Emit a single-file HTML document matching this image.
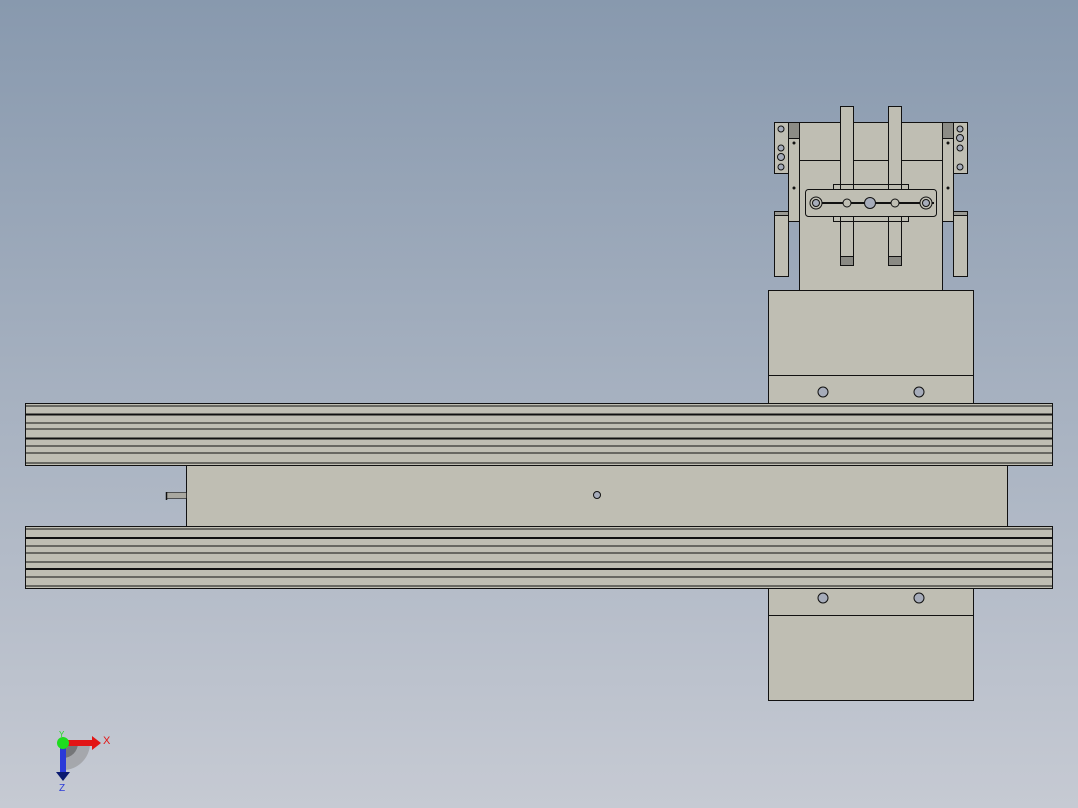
<!DOCTYPE html><html><head><style>body{margin:0;width:1078px;height:808px;overflow:hidden;background:linear-gradient(#8899ae,#c6cad3);}</style></head><body>
<svg width="1078" height="808" style="position:absolute;left:0;top:0" font-family="Liberation Sans, sans-serif">
<g fill="#bfbeb3" stroke="#111" stroke-width="1">
<!-- lower block bottom -->
<rect x="768.5" y="588.5" width="205" height="112"/>
<line x1="768" y1="615.5" x2="973" y2="615.5"/>
<circle cx="823" cy="598" r="5" fill="#a6acba"/><circle cx="919" cy="598" r="5" fill="#a6acba"/>
<!-- upper block -->
<rect x="768.5" y="290.5" width="205" height="113"/>
<line x1="768" y1="375.5" x2="973" y2="375.5"/>
<circle cx="823" cy="392" r="5" fill="#a6acba"/><circle cx="919" cy="392" r="5" fill="#a6acba"/>
<!-- gripper body -->
<rect x="799.5" y="122.5" width="143" height="168"/>
<line x1="799" y1="160.5" x2="942" y2="160.5"/>
<rect x="774.5" y="122.5" width="14" height="51"/>
<rect x="788.5" y="122.5" width="11" height="99"/>
<rect x="788.5" y="122.5" width="11" height="16" fill="#8c8c86"/>
<rect x="774.5" y="211.5" width="14" height="65"/>
<rect x="774.5" y="211.5" width="14" height="4" fill="#9a9a94"/>
<rect x="953.5" y="122.5" width="14" height="51"/>
<rect x="942.5" y="122.5" width="11" height="99"/>
<rect x="942.5" y="122.5" width="11" height="16" fill="#8c8c86"/>
<rect x="953.5" y="211.5" width="14" height="65"/>
<rect x="953.5" y="211.5" width="14" height="4" fill="#9a9a94"/>
<g fill="#a6acba"><circle cx="781" cy="129" r="3"/><circle cx="781" cy="148" r="3"/><circle cx="781" cy="157" r="3.5"/><circle cx="781" cy="167" r="3"/>
<circle cx="960" cy="129" r="3"/><circle cx="960" cy="138" r="3.5"/><circle cx="960" cy="148" r="3"/><circle cx="960" cy="167" r="3"/></g>
<g fill="#111" stroke="none"><circle cx="794" cy="143" r="1.5"/><circle cx="794" cy="188" r="1.5"/><circle cx="948" cy="143" r="1.5"/><circle cx="948" cy="188" r="1.5"/></g>
<!-- fingers -->
<rect x="840.5" y="106.5" width="13" height="159"/>
<rect x="888.5" y="106.5" width="13" height="159"/>
<rect x="840.5" y="256.5" width="13" height="9" fill="#8a8a84"/>
<rect x="888.5" y="256.5" width="13" height="9" fill="#8a8a84"/>
<rect x="833.5" y="184.5" width="75" height="37"/>
<rect x="840.5" y="184.5" width="13" height="37"/><rect x="888.5" y="184.5" width="13" height="37"/>
<rect x="805.5" y="189.5" width="131" height="27" rx="3"/>
<line x1="810" y1="203" x2="934" y2="203" stroke-width="2"/>
<circle cx="816" cy="203" r="6"/><circle cx="816" cy="203" r="3.5" fill="#a6acba"/>
<circle cx="926" cy="203" r="6"/><circle cx="926" cy="203" r="3.5" fill="#a6acba"/>
<circle cx="847" cy="203" r="4"/><circle cx="870" cy="203" r="5.5" fill="#a6acba"/><circle cx="895" cy="203" r="4"/>
<!-- middle block -->
<rect x="186.5" y="465.5" width="821" height="61"/>
<circle cx="597" cy="495" r="3.5" fill="#a6acba"/>
<rect x="166.5" y="492.5" width="20" height="6" fill="#a9a8a0" stroke-width="0.6"/>
<line x1="166.5" y1="492" x2="166.5" y2="500" stroke-width="1.5"/>
<!-- rails -->
<rect x="25.5" y="403.5" width="1027" height="62"/>
<rect x="25.5" y="526.5" width="1027" height="62"/>
</g>
<g stroke="#111">
<line x1="25" y1="406" x2="1052" y2="406"/>
<line x1="25" y1="414.5" x2="1052" y2="414.5" stroke-width="2"/>
<line x1="25" y1="423" x2="1052" y2="423"/>
<line x1="25" y1="429" x2="1052" y2="429"/>
<line x1="25" y1="438.5" x2="1052" y2="438.5" stroke-width="2"/>
<line x1="25" y1="446" x2="1052" y2="446"/>
<line x1="25" y1="453" x2="1052" y2="453"/>
<line x1="25" y1="463" x2="1052" y2="463"/>
<line x1="25" y1="529" x2="1052" y2="529"/>
<line x1="25" y1="538" x2="1052" y2="538" stroke-width="2"/>
<line x1="25" y1="546" x2="1052" y2="546"/>
<line x1="25" y1="553" x2="1052" y2="553"/>
<line x1="25" y1="562" x2="1052" y2="562"/>
<line x1="25" y1="569" x2="1052" y2="569" stroke-width="2"/>
<line x1="25" y1="577" x2="1052" y2="577"/>
<line x1="25" y1="586" x2="1052" y2="586"/>
</g>
<!-- axes -->
<path d="M63 743 L90 743 A27 27 0 0 1 63 770 Z" fill="#888" opacity="0.5"/>
<path d="M63 743 L78 743 A15 15 0 0 1 63 758 Z" fill="#555" opacity="0.6"/>
<rect x="63" y="740" width="30" height="6" fill="#e21515"/>
<polygon points="92,736 101,743 92,750" fill="#e21515"/>
<rect x="60" y="743" width="6" height="30" fill="#2a3ad8"/>
<polygon points="56,772 70,772 63,781" fill="#0a1a70"/>
<circle cx="63" cy="743" r="6" fill="#1edc1e"/>
<text x="103" y="744" fill="#e21515" font-size="11">X</text>
<text x="59" y="791" fill="#2a3ad8" font-size="10">Z</text>
<text x="59" y="737" fill="#1edc1e" font-size="8">Y</text>
</svg>
</body></html>
